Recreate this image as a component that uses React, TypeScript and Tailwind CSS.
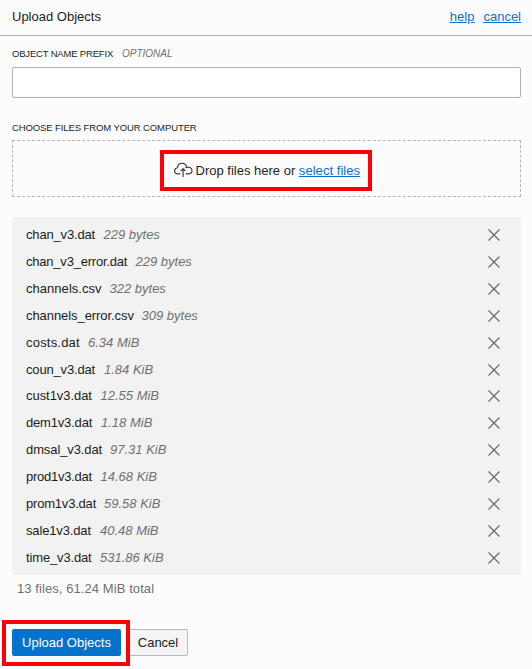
type FileEntry = { name: string; size: string; fit: string };

const files: FileEntry[] = [
  { name: "chan_v3.dat", size: "229 bytes", fit: "w-[69.5px] tracking-[-0.16px]" },
  { name: "chan_v3_error.dat", size: "229 bytes", fit: "w-[101.5px] tracking-[-0.21px]" },
  { name: "channels.csv", size: "322 bytes", fit: "w-[75.5px] tracking-[0.04px]" },
  { name: "channels_error.csv", size: "309 bytes", fit: "w-[107.5px] tracking-[-0.07px]" },
  { name: "costs.dat", size: "6.34 MiB", fit: "w-[54px] tracking-[0.2px]" },
  { name: "coun_v3.dat", size: "1.84 KiB", fit: "w-[70px] tracking-[-0.16px]" },
  { name: "cust1v3.dat", size: "12.55 MiB", fit: "w-[66.5px] tracking-[-0.05px]" },
  { name: "dem1v3.dat", size: "1.18 MiB", fit: "w-[67px] tracking-[-0.18px]" },
  { name: "dmsal_v3.dat", size: "97.31 KiB", fit: "w-[76px] tracking-[-0.1px]" },
  { name: "prod1v3.dat", size: "14.68 KiB", fit: "w-[66.5px] tracking-[-0.25px]" },
  { name: "prom1v3.dat", size: "59.58 KiB", fit: "w-[70px] tracking-[-0.2px]" },
  { name: "sale1v3.dat", size: "40.48 MiB", fit: "w-[66px] tracking-[-0.15px]" },
  { name: "time_v3.dat", size: "531.86 KiB", fit: "w-[66px] tracking-[-0.15px]" },
];

function CloudUpload() {
  return (
    <svg className="mb-[2px] h-4 w-[19px] shrink-0" viewBox="0 0 19 16" fill="none" stroke="#333" strokeWidth="1.1">
      <path d="M6.300 11.900H4.200C2.100 11.900.6 10.600.6 8.800c0-1.700 1.200-2.900 2.900-3.100C3.700 3.100 5.600 1.200 8.200 1.200c2.300 0 4.100 1.500 4.500 4.100M11.500 5.900c3.400-1.600 6.500-.1 6.500 2.700 0 2.100-1.500 3.300-3.700 3.300h-2.500" />
      <path d="M9.100 14.900V6.700M6.800 9l2.300-2.300L11.400 9" />
    </svg>
  );
}

function Remove() {
  return (
    <svg className="h-3 w-3" viewBox="0 0 12 12" fill="none" stroke="#666" strokeWidth="1.1">
      <path d="M.5.5l11 11M11.500.5l-11 11" />
    </svg>
  );
}

export default function App() {
  return (
    <div className="relative h-[669px] w-[532px] overflow-hidden bg-[#fcfcfc] font-['Liberation_Sans',Arial,sans-serif] text-[13px] leading-4 text-[#1c1c1c]">
      <header className="flex h-9 items-start justify-between border-b border-[#aeb3b9] pt-[9px] pr-[11px] pl-3">
        <h1>Upload Objects</h1>
        <nav className="flex gap-[9px] text-[#0572ce] underline">
          <a>help</a>
          <a>cancel</a>
        </nav>
      </header>
      <main className="pr-[11px] pl-3">
        <div className="flex h-[31px] items-start pt-3 text-[10px] leading-3">
          <label className="w-[110px] text-[9.5px] whitespace-nowrap tracking-[-0.18px]">OBJECT NAME PREFIX</label>
          <em className="text-[#707070]">OPTIONAL</em>
        </div>
        <input className="block h-[31px] w-full rounded-[2px] border border-[#aeb3b9] bg-white" />
        <div className="mt-6 h-[18px] text-[9.5px] leading-3 tracking-[-0.1px]">CHOOSE FILES FROM YOUR COMPUTER</div>
        <div className="flex h-[57px] items-start justify-center border border-dashed border-[#b4b4ba] pt-[9px]">
          <div className="mr-[2px] flex h-[41px] w-[212px] items-center border-4 border-[#fb0007] pl-[10px]">
            <CloudUpload />
            <span className="ml-[3px] whitespace-pre">Drop files here or </span>
            <a className="text-[#0572ce] underline tracking-[0.05px]">select files</a>
          </div>
        </div>
        <ul className="mt-5 flex h-[358px] flex-col bg-[#f2f2f2] pt-[5px]">
          {files.map((f) => (
            <li key={f.name} className="flex h-[26.85px] shrink-0 items-center pr-[21px] pl-[14px]">
              <span className={`shrink-0 whitespace-nowrap ${f.fit}`}>{f.name}</span>
              <em className="ml-2 flex-1 text-[#707070]">{f.size}</em>
              <Remove />
            </li>
          ))}
        </ul>
        <p className="mt-[6px] ml-[5px] tracking-[0.08px] text-[#707070]">13 files, 61.24 MiB total</p>
      </main>
      <footer className="mt-8 flex pl-3">
        <button className="h-[27px] w-[109px] rounded-[2px] bg-[#0572ce] text-white">Upload Objects</button>
        <button className="ml-[7px] h-[27px] w-[60px] rounded-[2px] border border-[#b4b8c0] bg-[#f5f5f5]">Cancel</button>
      </footer>
      <div className="pointer-events-none absolute top-[620px] left-[2px] h-[46px] w-[128px] border-4 border-[#fb0007]" />
    </div>
  );
}
